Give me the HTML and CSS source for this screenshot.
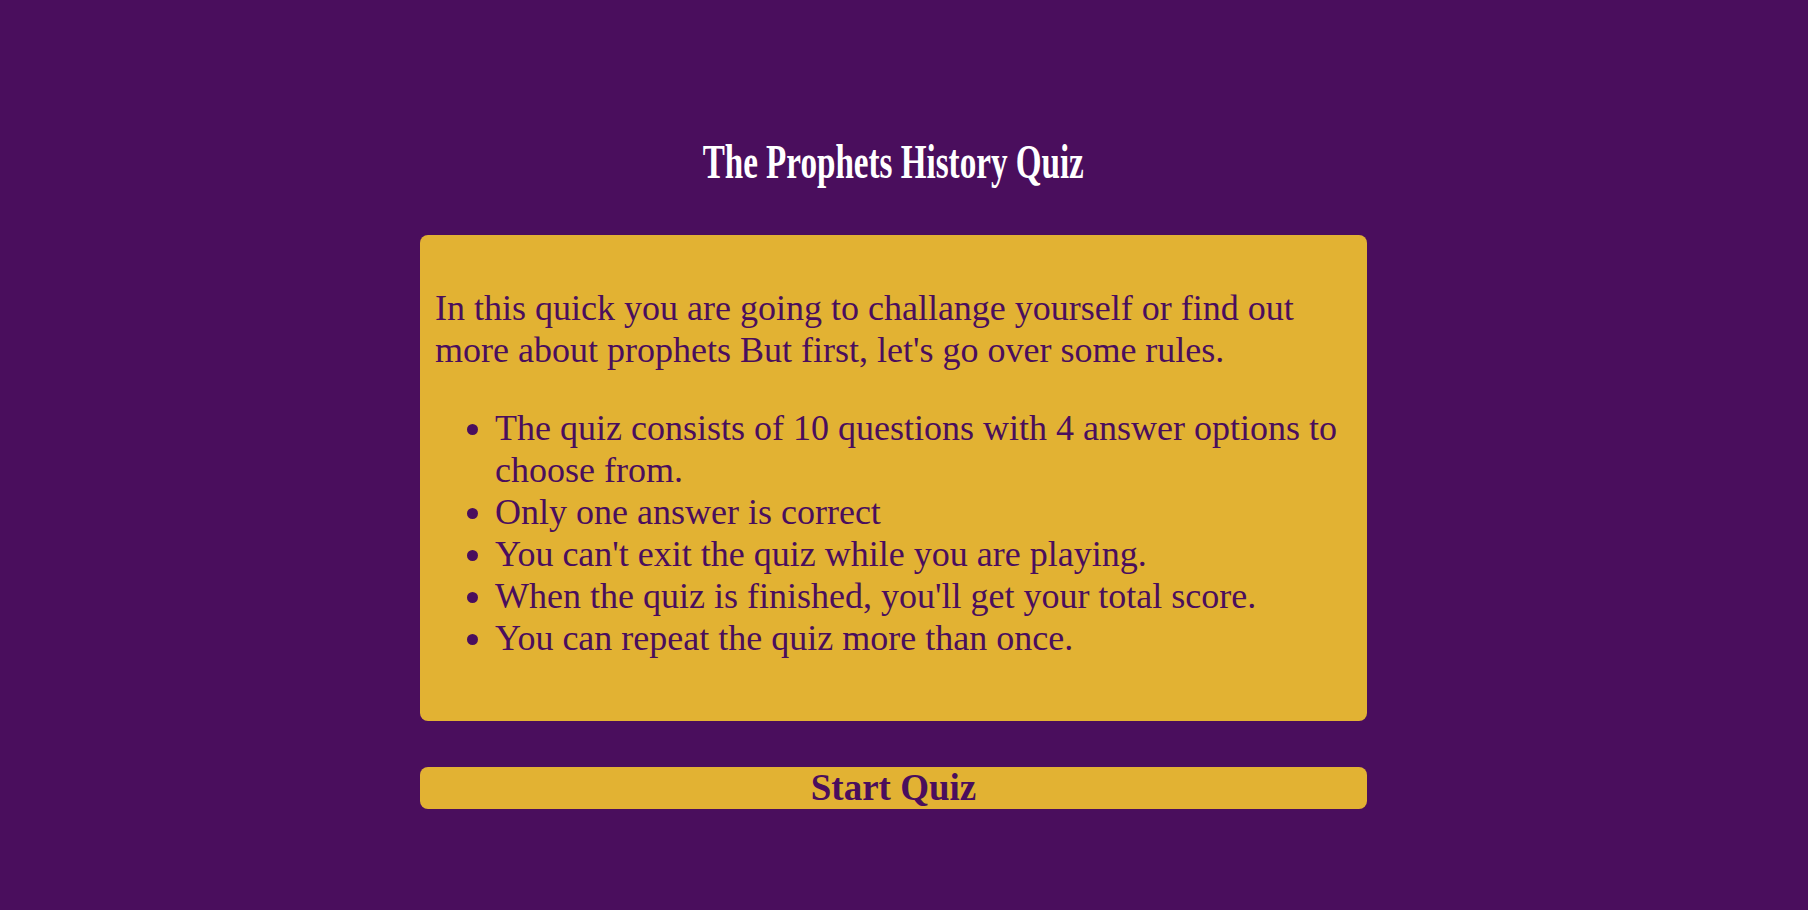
FILE: index.html
```html
<!DOCTYPE html>
<html lang="en">
<head>
<meta charset="utf-8">
<title>The Prophets History Quiz</title>
<link rel="stylesheet" href="styles.css">
</head>
<body>
<main class="page">
  <h1 class="title"><span class="title-text">The Prophets History Quiz</span></h1>
  <section class="rules">
    <p class="intro">In this quick you are going to challange yourself or find out more about prophets But first, let's go over some rules.</p>
    <ul class="rule-list">
      <li>The quiz consists of 10 questions with 4 answer options to choose from.</li>
      <li>Only one answer is correct</li>
      <li>You can't exit the quiz while you are playing.</li>
      <li>When the quiz is finished, you'll get your total score.</li>
      <li>You can repeat the quiz more than once.</li>
    </ul>
  </section>
  <button class="start-btn" type="button">Start Quiz</button>
</main>
</body>
</html>
```
FILE: styles.css
```css
html, body {
  margin: 0;
  padding: 0;
}
body {
  background: #4a0e5d;
  font-family: "Liberation Serif", "Times New Roman", serif;
  color: #4a0e5d;
}
.page {
  width: calc(100% - 21px);
  display: flex;
  flex-direction: column;
  align-items: center;
}
.title {
  margin: 135px 0 0;
  height: 100px;
  font-size: 48px;
  font-weight: bold;
  color: #ffffff;
  line-height: 53px;
}
.title-text {
  display: inline-block;
  transform: scaleX(0.69);
}
.rules {
  box-sizing: border-box;
  width: 947px;
  background: #e2b233;
  border-radius: 8px;
  padding: 16px 15px 26px;
  font-size: 36px;
}
.intro {
  margin: 36px 0 35px;
}
.rule-list {
  margin: 36px 0;
  padding-left: 60px;
}
.start-btn {
  margin-top: 46px;
  width: 947px;
  height: 42px;
  padding: 0;
  border: none;
  border-radius: 8px;
  background: #e2b233;
  color: #4a0e5d;
  font-family: "Liberation Serif", "Times New Roman", serif;
  font-weight: bold;
  font-size: 37px;
  line-height: 42px;
}
```
